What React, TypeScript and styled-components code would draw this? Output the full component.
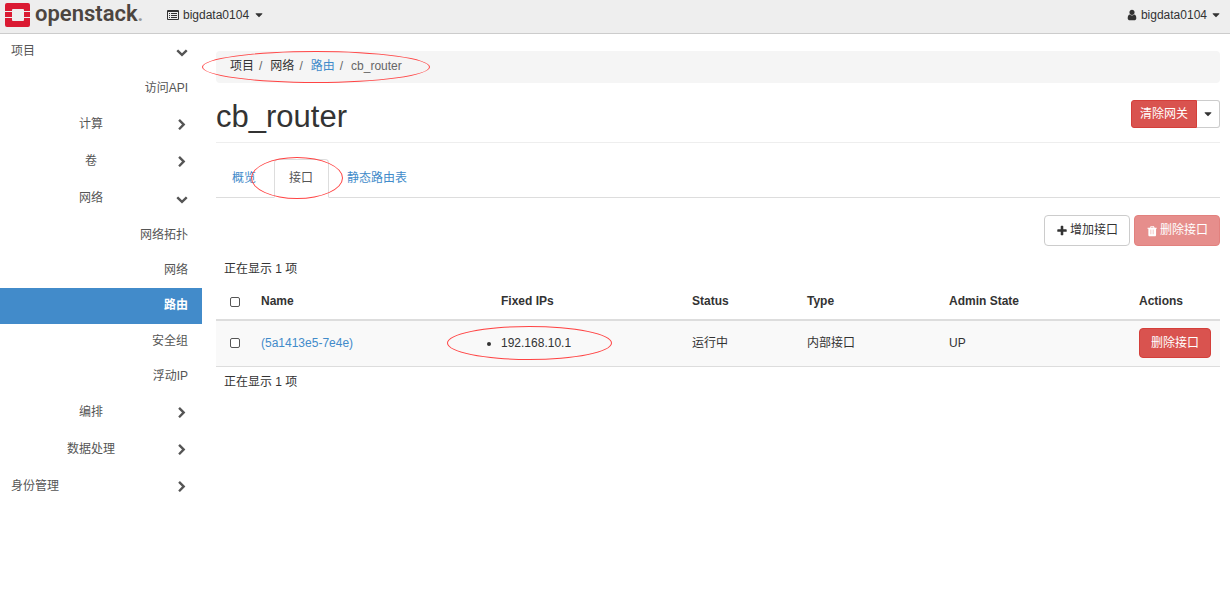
import React from "react";
import styled, { createGlobalStyle } from "styled-components";

const sans = `"Liberation Sans", Arial, "Noto Sans CJK SC", sans-serif`;

const GlobalStyle = createGlobalStyle`
  *, *::before, *::after { box-sizing: border-box; }
  body {
    margin: 0;
    background: #fff;
    color: #333;
    font: 12px/17px ${sans};
  }
  a { color: #428bca; text-decoration: none; }
  button { font: inherit; cursor: pointer; }
`;

const iconPaths = {
  right:
    "M1363 877l-742 742q-19 19-45 19t-45-19l-166-166q-19-19-19-45t19-45l531-531-531-531q-19-19-19-45t19-45l166-166q19-19 45-19t45 19l742 742q19 19 19 45t-19 45z",
  down:
    "M1683 808l-742 741q-19 19-45 19t-45-19l-742-741q-19-19-19-45.5t19-45.5l166-165q19-19 45-19t45 19l531 531 531-531q19-19 45-19t45 19l166 165q19 19 19 45.5t-19 45.5z",
  user:
    "M1536 1399q0 109-62.5 187t-150.5 78h-854q-88 0-150.5-78t-62.5-187q0-85 8.5-160.5t31.5-152 58.5-131 94-89 134.5-34.5q131 128 313 128t313-128q76 0 134.5 34.5t94 89 58.5 131 31.5 152 8.5 160.5zm-256-887q0 159-112.5 271.5t-271.5 112.5-271.5-112.5-112.5-271.5 112.5-271.5 271.5-112.5 271.5 112.5 112.5 271.5z",
  trash:
    "M680 1376v-704h-50v704zm241 0v-704h-50v704zm241 0v-704h-50v704zm-490-992h448l-48-117q-7-9-17-11h-317q-10 2-17 11zm928 32v96q0 32-32 32h-64v948q0 83-47 143.5t-113 60.5h-832q-66 0-113-58.5t-47-141.5v-952h-96q-32 0-32-32v-64q0-32 32-32h309l70-167q15-37 54-63t79-26h320q40 0 79 26t54 63l70 167h309z",
  plus:
    "M1600 736v192q0 40-28 68t-68 28h-416v416q0 40-28 68t-68 28h-192q-40 0-68-28t-28-68v-416h-416q-40 0-68-28t-28-68v-192q0-40 28-68t68-28h416v-416q0-40 28-68t68-28h192q40 0 68 28t28 68v416h416q40 0 68 28t28 68z",
  caret:
    "M1408 704q0 26-19 45l-448 448q-19 19-45 19t-45-19l-448-448q-19-19-19-45t19-45 45-19h896q26 0 45 19t19 45z",
};

const IconSvg = styled.svg`
  flex: none;
  width: 12px;
  height: 12px;
  fill: currentColor;
`;

const Icon = ({ name }: { name: keyof typeof iconPaths }) => (
  <IconSvg viewBox="0 0 1792 1792" fillRule="evenodd" aria-hidden="true">
    <path d={iconPaths[name]} />
  </IconSvg>
);

const ListIcon = () => (
  <IconSvg viewBox="0 0 12 12" aria-hidden="true">
    <path
      fillRule="evenodd"
      d="M1 1h10a1 1 0 0 1 1 1v8a1 1 0 0 1-1 1H1a1 1 0 0 1-1-1V2a1 1 0 0 1 1-1zM1 3V10h10V3zM2 4h1v1H2zM4 4h6v1H4zM2 6h1v1H2zM4 6h6v1H4zM2 8h1v1H2zM4 8h6v1H4z"
    />
  </IconSvg>
);

const TopBar = styled.header`
  display: flex;
  align-items: center;
  height: 34px;
  padding: 0 8px 3px 5px;
  background: #eee;
  border-bottom: 1px solid #ccc;
`;

const Brand = styled.a`
  display: flex;
  align-items: center;
  gap: 5px;
  width: 162px;
  color: #4c4540;
  font: 600 22px/26px Roboto, sans-serif;
`;

const BrandName = styled.span`
  padding-bottom: 2px;

  small {
    color: #999;
    font-size: 20px;
  }
`;

const BrandMark = styled.svg`
  width: 25px;
  height: 24px;
`;

const BarButton = styled.button<{ $end?: boolean }>`
  display: flex;
  align-items: center;
  gap: ${(p) => (p.$end ? "3px" : "4px")};
  margin-left: ${(p) => (p.$end ? "auto" : "0")};
  padding: 0;
  border: 0;
  background: none;
  color: #333;
`;

const Body = styled.div`
  display: flex;
  align-items: flex-start;
`;

const Sidebar = styled.nav`
  flex: none;
  width: 202px;
`;

const Group = styled.button<{ $top?: boolean; $first?: boolean }>`
  display: flex;
  align-items: center;
  gap: 4px;
  width: 100%;
  height: ${(p) => (p.$first ? "35px" : "37px")};
  padding: 0 14px 0 ${(p) => (p.$top ? "11px" : "10px")};
  border: 0;
  background: none;
  color: #555;

  span {
    flex: 1;
    text-align: ${(p) => (p.$top ? "left" : "center")};
  }
`;

const Leaves = styled.div<{ $roomy?: boolean }>`
  padding-top: ${(p) => (p.$roomy ? "2px" : "1px")};
`;

const Leaf = styled.a<{ $active?: boolean }>`
  display: block;
  height: ${(p) => (p.$active ? "36px" : "35px")};
  padding: 9px 14px 0;
  text-align: right;
  color: ${(p) => (p.$active ? "#fff" : "#555")};
  background: ${(p) => (p.$active ? "#428bca" : "none")};
  font-weight: ${(p) => (p.$active ? 700 : 400)};
`;

const Main = styled.main`
  flex: 1;
  min-width: 0;
  padding: 17px 10px 24px 14px;
`;

const Ring = styled.i<{ $inset: string }>`
  position: absolute;
  inset: ${(p) => p.$inset};
  border: 1px solid #f44;
  border-radius: 50%;
  pointer-events: none;
`;

const Crumbs = styled.nav`
  display: flex;
  height: 32px;
  padding: 0 14px;
  border-radius: 4px;
  background: #f5f5f5;
`;

const CrumbList = styled.ol`
  position: relative;
  display: flex;
  margin: 0;
  padding: 0;
  list-style: none;
  line-height: 30px;

  li + li::before {
    content: "/";
    padding: 0 8px 0 5px;
    color: #666;
  }
  li:last-of-type {
    color: #666;
  }
`;

const Heading = styled.div`
  display: flex;
  align-items: center;
  justify-content: space-between;
  height: 60px;
  padding-top: 2px;
  border-bottom: 1px solid #eee;
`;

const Title = styled.h1`
  margin: 0;
  padding-top: 6px;
  font-size: 31px;
  line-height: 40px;
  font-weight: 400;
`;

const Split = styled.div`
  display: flex;

  button:first-child {
    border-radius: 3px 0 0 3px;
  }
  button:last-child {
    border-radius: 0 3px 3px 0;
    border-left: 0;
  }
`;

const Button = styled.button<{ $danger?: boolean; $size?: "small" | "caret" | "row" }>`
  display: flex;
  align-items: center;
  justify-content: center;
  gap: 2px;
  height: ${(p) => (p.$size === "row" ? "30px" : p.$size ? "28px" : "31px")};
  padding: ${(p) =>
    p.$size === "small" ? "2px 8px 0" : p.$size === "caret" ? "0 5px" : "0 11px"};
  border: 1px solid ${(p) => (p.$danger ? "#d43f3a" : "#ccc")};
  border-radius: 4px;
  background: ${(p) => (p.$danger ? "#d9534f" : "#fff")};
  color: ${(p) => (p.$danger ? "#fff" : "#333")};

  &:disabled {
    opacity: 0.65;
    cursor: not-allowed;
  }
`;

const Tabs = styled.div`
  display: flex;
  margin-top: 16px;
  border-bottom: 1px solid #ddd;
`;

const Tab = styled.a<{ $active?: boolean }>`
  position: relative;
  height: 39px;
  margin-bottom: -1px;
  margin-right: 2px;
  padding: 0 15px;
  line-height: 36px;
  border: 1px solid transparent;
  border-radius: 4px 4px 0 0;
  ${(p) =>
    p.$active &&
    `
    padding: 0 15px 0 14px;
    color: #555;
    background: #fff;
    border-color: #ddd #ddd #fff;
  `}
`;

const Toolbar = styled.div`
  display: flex;
  justify-content: flex-end;
  gap: 4px;
  margin-top: 17px;
`;

const Count = styled.p<{ $above?: boolean }>`
  margin: 0;
  padding: ${(p) => (p.$above ? "15px" : "7px")} 8px 6px;
`;

const Table = styled.table`
  width: 100%;
  table-layout: fixed;
  border-collapse: collapse;

  th,
  td {
    padding: 8px;
    text-align: left;
    vertical-align: middle;
  }
  th {
    height: 36px;
    border-bottom: 2px solid #ddd;
  }
  td {
    padding: 7px 8px 8px;
    background: #f9f9f9;
    border-bottom: 1px solid #ddd;
  }
  th:first-child,
  td:first-child {
    padding-left: 14px;
  }
`;

const Check = styled.input`
  display: block;
  appearance: none;
  width: 10px;
  height: 10px;
  margin: 0;
  border: 1px solid #555;
  border-radius: 2px;
  background: #fff;
`;

const IpList = styled.ul`
  position: relative;
  margin: 0;
  padding: 0;
`;

const columns = [
  { label: "Name", width: 240 },
  { label: "Fixed IPs", width: 191 },
  { label: "Status", width: 115 },
  { label: "Type", width: 142 },
  { label: "Admin State", width: 190 },
  { label: "Actions", width: 89 },
];

export default function App() {
  return (
    <>
      <GlobalStyle />
      <TopBar>
        <Brand href="#">
          <BrandMark viewBox="0 0 25 24" aria-hidden="true">
            <path
              fill="#da1a32"
              d="M2 0h21a2 2 0 0 1 2 2v6h-6V7a1 1 0 0 0-1-1H8a1 1 0 0 0-1 1v1H0V2a2 2 0 0 1 2-2zM0 9h7v5H0zM19 9h6v5h-6zM0 15h7v2a1 1 0 0 0 1 1h10a1 1 0 0 0 1-1v-2h6v7a2 2 0 0 1-2 2H2a2 2 0 0 1-2-2z"
            />
          </BrandMark>
          <BrandName>
            openstack<small>.</small>
          </BrandName>
        </Brand>
        <BarButton>
          <ListIcon />
          bigdata0104
          <Icon name="caret" />
        </BarButton>
        <BarButton $end>
          <Icon name="user" />
          bigdata0104
          <Icon name="caret" />
        </BarButton>
      </TopBar>
      <Body>
        <Sidebar>
          <Group $top $first><span>项目</span><Icon name="down" /></Group>
          <Leaves $roomy>
            <Leaf href="#">访问API</Leaf>
          </Leaves>
          <Group><span>计算</span><Icon name="right" /></Group>
          <Group><span>卷</span><Icon name="right" /></Group>
          <Group><span>网络</span><Icon name="down" /></Group>
          <Leaves>
            <Leaf href="#">网络拓扑</Leaf>
            <Leaf href="#">网络</Leaf>
            <Leaf href="#" $active>路由</Leaf>
            <Leaf href="#">安全组</Leaf>
            <Leaf href="#">浮动IP</Leaf>
          </Leaves>
          <Group><span>编排</span><Icon name="right" /></Group>
          <Group><span>数据处理</span><Icon name="right" /></Group>
          <Group $top><span>身份管理</span><Icon name="right" /></Group>
        </Sidebar>
        <Main>
          <Crumbs>
            <CrumbList>
              <li>项目</li>
              <li>网络</li>
              <li><a href="#">路由</a></li>
              <li>cb_router</li>
              <Ring $inset="0 -28px 0 -28px" as="div" />
            </CrumbList>
          </Crumbs>
          <Heading>
            <Title>cb_router</Title>
            <Split>
              <Button $danger $size="small">清除网关</Button>
              <Button $size="caret" aria-label="更多操作"><Icon name="caret" /></Button>
            </Split>
          </Heading>
          <Tabs>
            <Tab href="#">概览</Tab>
            <Tab href="#" $active>
              接口
              <Ring $inset="-3px -15px -2px -24px" />
            </Tab>
            <Tab href="#">静态路由表</Tab>
          </Tabs>
          <Toolbar>
            <Button><Icon name="plus" />增加接口</Button>
            <Button $danger disabled><Icon name="trash" />删除接口</Button>
          </Toolbar>
          <Count $above>正在显示 1 项</Count>
          <Table>
            <colgroup>
              <col width={37} />
              {columns.map((c) => <col key={c.label} width={c.width} />)}
            </colgroup>
            <thead>
              <tr>
                <th><Check type="checkbox" aria-label="全选" /></th>
                {columns.map((c) => <th key={c.label}>{c.label}</th>)}
              </tr>
            </thead>
            <tbody>
              <tr>
                <td><Check type="checkbox" aria-label="选择 5a1413e5-7e4e" /></td>
                <td><a href="#">(5a1413e5-7e4e)</a></td>
                <td>
                  <IpList>
                    <li>192.168.10.1</li>
                    <Ring $inset="-9px 64px -8px -54px" as="div" />
                  </IpList>
                </td>
                <td>运行中</td>
                <td>内部接口</td>
                <td>UP</td>
                <td><Button $danger $size="row">删除接口</Button></td>
              </tr>
            </tbody>
          </Table>
          <Count>正在显示 1 项</Count>
        </Main>
      </Body>
    </>
  );
}
